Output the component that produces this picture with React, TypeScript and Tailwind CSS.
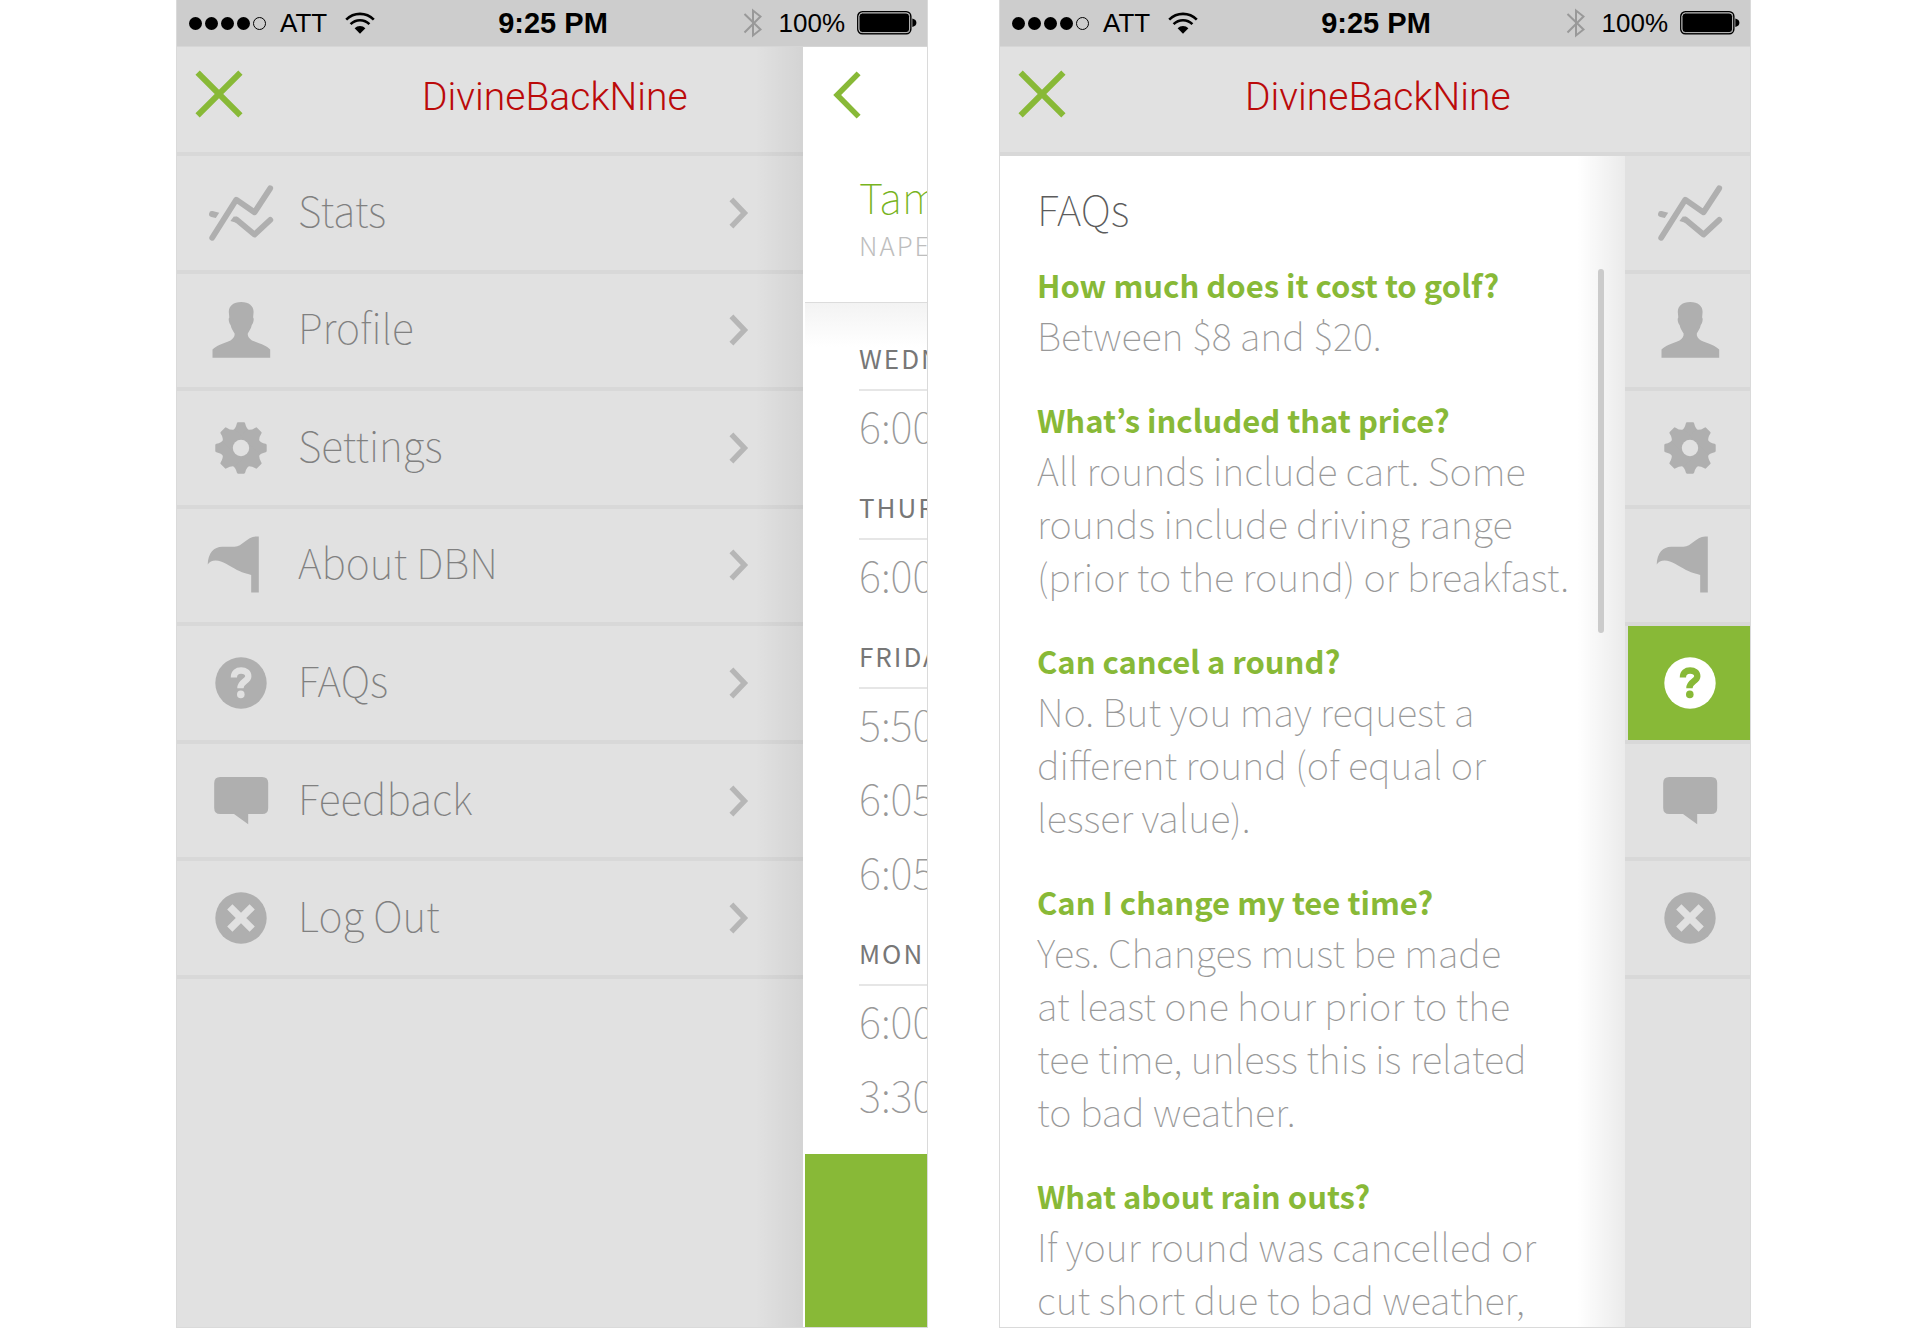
import type { ReactNode } from "react";

type IconName = "stats" | "profile" | "settings" | "flag" | "help" | "feedback" | "logout";

const ITEMS: { icon: IconName; label: string }[] = [
  { icon: "stats", label: "Stats" },
  { icon: "profile", label: "Profile" },
  { icon: "settings", label: "Settings" },
  { icon: "flag", label: "About DBN" },
  { icon: "help", label: "FAQs" },
  { icon: "feedback", label: "Feedback" },
  { icon: "logout", label: "Log Out" },
];

const DAYS = [
  { day: "WEDN", times: ["6:00"] },
  { day: "THUR", times: ["6:00"] },
  { day: "FRIDA", times: ["5:50", "6:05", "6:05"] },
  { day: "MON", times: ["6:00", "3:30"] },
];

const FAQS = [
  { q: "How much does it cost to golf?", a: "Between $8 and $20." },
  {
    q: "What’s included that price?",
    a: "All rounds include cart. Some\nrounds include driving range\n(prior to the round) or breakfast.",
  },
  {
    q: "Can cancel a round?",
    a: "No. But you may request a\ndifferent round (of equal or\nlesser value).",
  },
  {
    q: "Can I change my tee time?",
    a: "Yes. Changes must be made\nat least one hour prior to the\ntee time, unless this is related\nto bad weather.",
  },
  {
    q: "What about rain outs?",
    a: "If your round was cancelled or\ncut short due to bad weather,",
  },
];

const TEETH = [0, 45, 90, 135, 180, 225, 270, 315];

/* Each drawing uses currentColor for the shape and `hole` for what is cut out of it. */
function shape(name: IconName, hole: string): ReactNode {
  switch (name) {
    case "stats":
      return (
        <>
          <g fill="none" stroke="currentColor" strokeWidth="5.8" strokeLinecap="round" strokeLinejoin="round">
            <path d="M4.2 54.7 28.2 16.7 46.5 29.3 62.2 5.3" />
            <path d="M28.4 36.6 46.5 51.6 62.3 36.9" />
          </g>
          <path fill="currentColor" d="M4.6 28.1 11.2 29.8 7.8 35 3.4 33.9A2.95 2.95 0 0 1 4.6 28.1ZM22.4 38 25.8 33.6 29.6 33.9 29 40Z" />
        </>
      );
    case "profile":
      return (
        <path
          fill="currentColor"
          d="M33.2 2.1C41 2.1 45.6 6 45.6 12L45.1 17.5C46.2 18.2 45.8 22.6 43.8 25 43 29 41 31 39.8 33.5 39.4 36 41 38.7 44 40.4 52 43.6 58.5 45.5 62.2 49.4V57.7H4.5V49.4C8.2 45.5 14.7 43.6 22.5 40.4 25.5 38.7 27 36 26.6 33.5 25.2 31 23.4 29 22.6 25 20.6 22.6 20.2 18.2 21.3 17.5L20.8 12C20.8 6 25.4 2.1 33.2 2.1Z"
        />
      );
    case "settings":
      return (
        <g transform="translate(33 30)">
          {TEETH.map((angle) => (
            <path
              key={angle}
              transform={`rotate(${angle})`}
              fill="currentColor"
              d="M-3-25.7H3Q3.9-25.7 4.2-24.6 5.2-19.6 8.6-17.4V0H-8.6V-17.4Q-5.2-19.6-4.2-24.6-3.9-25.7-3-25.7Z"
            />
          ))}
          <circle r="8.2" fill={hole} />
        </g>
      );
    case "flag":
      return (
        <path
          fill="currentColor"
          d="M50.8 1.6V57.6H43.2V40C37 38 34 37.5 29 35 21 31 15 25.8 7.5 25.6 4 25.6 1.5 26.8-.3 29.6 0 18 6 11.8 14.2 11.8H26.5C34.5 11.8 38.5 2 48.2 1.6Z"
        />
      );
    case "help":
      return (
        <>
          <circle cx="33" cy="30" r="25.7" fill="currentColor" />
          <path d="M25.9 24.4C25.9 19.6 29 17.5 33.1 17.5 37.4 17.5 40.3 19.7 40.3 23.2 40.3 28.4 32.4 28.4 32.4 35.2" fill="none" stroke={hole} strokeWidth="6.3" />
          <circle cx="32.8" cy="41.4" r="3.8" fill={hole} />
        </>
      );
    case "feedback":
      return (
        <path
          fill="currentColor"
          d="M12.2 6H54.2Q60.2 6 60.2 12V37Q60.2 43 54.2 43H40.2V53.3L26 43H12.2Q6.2 43 6.2 37V12Q6.2 6 12.2 6Z"
        />
      );
    case "logout":
      return (
        <>
          <circle cx="33" cy="30" r="25.7" fill="currentColor" />
          <path d="M21.8 18.8 44.2 41.2M44.2 18.8 21.8 41.2" stroke={hole} strokeWidth="7.4" />
        </>
      );
  }
}

function Icon({ name, hole = "#e1e1e1" }: { name: IconName; hole?: string }) {
  return (
    <svg viewBox="0 0 66 60" className="h-[60px] w-[66px] shrink-0 overflow-visible" aria-hidden="true">
      {shape(name, hole)}
    </svg>
  );
}

function StatusBar() {
  return (
    <div className="grid h-[47px] shrink-0 grid-cols-[1fr_auto_1fr] items-center border-b border-[#d6d6d6] bg-[#cdcdcd] pr-2.5 pl-3 font-['Liberation_Sans',Arial,sans-serif] text-[26px] leading-8 text-black">
      <div className="flex items-center gap-3.5">
        <div className="flex gap-[3px]">
          <i className="size-[13px] rounded-full bg-black" />
          <i className="size-[13px] rounded-full bg-black" />
          <i className="size-[13px] rounded-full bg-black" />
          <i className="size-[13px] rounded-full bg-black" />
          <i className="size-[13px] rounded-full border border-black" />
        </div>
        <span>ATT</span>
        <svg viewBox="0 0 30 22" className="ml-1 h-[22px] w-[30px]" aria-hidden="true">
          <g fill="none" stroke="#000" strokeWidth="2.6">
            <path d="M1.2 7.6A19.6 19.6 0 0 1 28.8 7.6" />
            <path d="M5.6 12.2A13.3 13.3 0 0 1 24.4 12.2" />
          </g>
          <path d="M9.6 16.2A7.8 7.8 0 0 1 20.4 16.2L15 21.8Z" />
        </svg>
      </div>
      <span className="text-[29px] font-bold">9:25 PM</span>
      <div className="flex items-center justify-end">
        <svg viewBox="0 0 20 30" className="mr-4 h-[30px] w-5" fill="none" stroke="#999" strokeWidth="2" aria-hidden="true">
          <path d="M1.5 6 17.5 21.5 10 27.5V2.5L17.5 8.5 1.5 24.5" />
        </svg>
        <span className="mr-3">100%</span>
        <svg viewBox="0 0 60 24" className="h-6 w-[60px]" aria-hidden="true">
          <rect x=".8" y=".8" width="53" height="22" rx="4.5" fill="none" stroke="#000" strokeWidth="1.5" />
          <rect x="2" y="2" width="50.6" height="19.6" rx="3.5" fill="#000" stroke="#bbb" strokeWidth="1" />
          <path d="M55.3 7.6Q59.4 8.6 59.4 11.8T55.3 16Z" />
        </svg>
      </div>
    </div>
  );
}

function Header() {
  return (
    <header className="flex h-[109px] shrink-0 items-center gap-[179px] border-b-4 border-[#d8d8d8] pb-3 pl-[18px]">
      <button type="button" aria-label="Close menu" className="text-[#88b937]">
        <svg viewBox="0 0 48 48" className="size-12" fill="none" stroke="currentColor" strokeWidth="6" aria-hidden="true">
          <path d="M2.6 2.6 45.4 45.4M45.4 2.6 2.6 45.4" />
        </svg>
      </button>
      <h1 className="pt-1.5 font-['Roboto','Liberation_Sans',sans-serif] text-[39px] leading-[48px] font-light text-[#bb0a0a]">
        DivineBackNine
      </h1>
    </header>
  );
}

function Phone({ children }: { children: ReactNode }) {
  return (
    <section className="flex min-w-0 flex-1 flex-col overflow-hidden border border-t-0 border-[#dadada] bg-[#e1e1e1]">
      <StatusBar />
      {children}
    </section>
  );
}

function MenuScreen() {
  return (
    <Phone>
      <div className="flex grow">
        <div className="relative flex min-w-0 flex-1 flex-col">
          <Header />
          <nav aria-label="Main">
            <ul className="grid h-[823px] grid-rows-7">
              {ITEMS.map(({ icon, label }) => (
                <li key={label} className="flex border-b-4 border-[#d8d8d8]">
                  <button type="button" className="flex flex-1 items-center pr-[54px] pl-[31px] text-left text-[#afafaf]">
                    <Icon name={icon} />
                    <span className="ml-6 flex-1 pb-2 text-[41px] leading-[52px] font-thin text-[#808080]">{label}</span>
                    <svg viewBox="0 0 20 32" className="h-8 w-5 text-[#b6b6b6]" fill="none" stroke="currentColor" strokeWidth="5.4" aria-hidden="true">
                      <path d="M2.4 2.3 15.4 16 2.4 29.7" />
                    </svg>
                  </button>
                </li>
              ))}
            </ul>
          </nav>
          <div className="pointer-events-none absolute inset-y-0 right-0 w-12 bg-linear-to-r from-transparent to-black/6" />
        </div>
        <div className="flex w-[124px] shrink-0 flex-col overflow-hidden bg-white pl-0.5 whitespace-nowrap">
          <div className="border-b border-[#dcdcdc] pt-6 pb-10">
            <button type="button" aria-label="Back" className="ml-7 block text-[#88b937]">
              <svg viewBox="0 0 28 48" className="h-12 w-7" fill="none" stroke="currentColor" strokeWidth="5.6" aria-hidden="true">
                <path d="M25.6 2.4 4.2 24 25.6 45.6" />
              </svg>
            </button>
            <h2 className="mt-[52px] ml-[54px] text-[42px] leading-[50px] font-thin text-[#78b41e]">Tam</h2>
            <p className="mt-[7px] ml-[54px] text-[26px] leading-[34px] font-light tracking-[2px] text-[#bebebe]">NAPE</p>
          </div>
          <div className="bg-linear-to-b from-[#f3f3f3] to-white to-[44px] pt-[13px] pb-5 pl-[54px]">
            {DAYS.map(({ day, times }) => (
              <section key={day}>
                <h3 className="border-b-2 border-[#e6e6e6] pt-[29px] pb-[18px] text-[26px] leading-[26px] tracking-[2px] text-[#777]">
                  {day}
                </h3>
                {times.map((time, i) => (
                  <p key={i} className="pb-[7px] text-[42px] leading-[67px] font-thin text-[#999]">
                    {time}
                  </p>
                ))}
              </section>
            ))}
          </div>
          <div className="min-h-[172px] grow bg-[#88b937]" />
        </div>
      </div>
    </Phone>
  );
}

function FaqScreen() {
  return (
    <Phone>
      <Header />
      <div className="flex grow">
        <main className="relative min-w-0 flex-1 bg-white pt-[26px] pl-[37px]">
          <div className="pointer-events-none absolute inset-y-0 right-0 w-12 bg-linear-to-r from-transparent to-black/8" />
          <div className="absolute top-[113px] right-[21px] h-[364px] w-1.5 rounded-full bg-[#cbcbcb]" />
          <h2 className="text-[42px] leading-[52px] font-thin text-[#5c5c5c]">FAQs</h2>
          <dl className="mt-[27px] flex flex-col gap-[35px]">
            {FAQS.map(({ q, a }) => (
              <div key={q}>
                <dt className="text-[31px] leading-[47px] font-bold text-[#88b937]">{q}</dt>
                <dd className="text-[38px] leading-[53px] font-thin whitespace-pre-line text-[#999]">{a}</dd>
              </div>
            ))}
          </dl>
        </main>
        <nav aria-label="Sections" className="w-[125px] shrink-0">
          <ul className="grid h-[823px] grid-rows-7">
            {ITEMS.map(({ icon, label }) => (
              <li key={label} className="flex border-b-4 border-[#d8d8d8] pl-[3px]">
                {icon === "help" ? (
                  <button type="button" aria-label={label} aria-current="page" className="flex flex-1 items-center justify-center bg-[#88b937] pl-px text-white">
                    <Icon name={icon} hole="#88b937" />
                  </button>
                ) : (
                  <button type="button" aria-label={label} className="flex flex-1 items-center justify-center pl-px text-[#afafaf]">
                    <Icon name={icon} />
                  </button>
                )}
              </li>
            ))}
          </ul>
        </nav>
      </div>
    </Phone>
  );
}

export default function App() {
  return (
    <div className="flex min-h-screen gap-[71px] bg-white pr-[174px] pl-44 font-['Noto_Sans_CJK_KR','Noto_Sans',sans-serif]">
      <MenuScreen />
      <FaqScreen />
    </div>
  );
}
